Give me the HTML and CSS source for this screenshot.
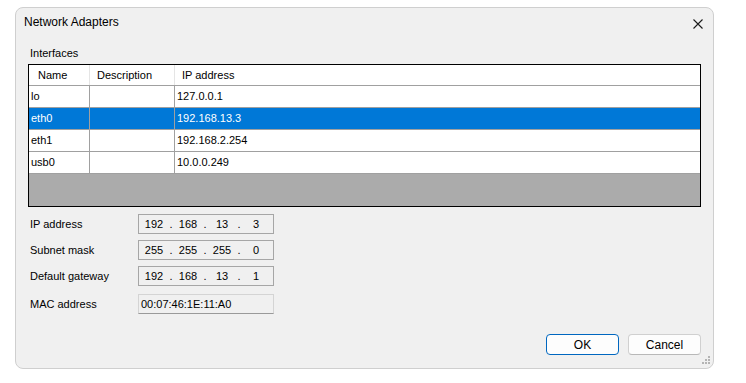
FILE: index.html
```html
<!DOCTYPE html>
<html lang="en">
<head>
  <meta charset="UTF-8">
  <title>Network Adapters</title>
  <link rel="stylesheet" href="styles.css">
</head>
<body>
  <div class="dialog">
    <div class="titlebar">
      <span class="title">Network Adapters</span>
      <svg class="close" width="10" height="10" viewBox="0 0 10 10">
        <path d="M0.5 0.5 L9.5 9.5 M9.5 0.5 L0.5 9.5" stroke="#1a1a1a" stroke-width="1.1" fill="none"/>
      </svg>
    </div>

    <div class="content">
      <div class="group-label">Interfaces</div>
      <div class="list">
        <div class="row head">
          <div class="cell name">Name</div>
          <div class="cell desc">Description</div>
          <div class="cell ip">IP address</div>
        </div>
        <div class="row">
          <div class="cell name">lo</div>
          <div class="cell desc"></div>
          <div class="cell ip">127.0.0.1</div>
        </div>
        <div class="row selected">
          <div class="cell name">eth0</div>
          <div class="cell desc"></div>
          <div class="cell ip">192.168.13.3</div>
        </div>
        <div class="row">
          <div class="cell name">eth1</div>
          <div class="cell desc"></div>
          <div class="cell ip">192.168.2.254</div>
        </div>
        <div class="row">
          <div class="cell name">usb0</div>
          <div class="cell desc"></div>
          <div class="cell ip">10.0.0.249</div>
        </div>
        <div class="empty"></div>
      </div>

      <div class="fields">
        <div class="field">
          <span class="label">IP address</span>
          <div class="ipbox">
            <span class="oct">192</span><span class="dot">.</span><span class="oct">168</span><span class="dot">.</span><span class="oct">13</span><span class="dot">.</span><span class="oct">3</span>
          </div>
        </div>
        <div class="field">
          <span class="label">Subnet mask</span>
          <div class="ipbox">
            <span class="oct">255</span><span class="dot">.</span><span class="oct">255</span><span class="dot">.</span><span class="oct">255</span><span class="dot">.</span><span class="oct">0</span>
          </div>
        </div>
        <div class="field">
          <span class="label">Default gateway</span>
          <div class="ipbox">
            <span class="oct">192</span><span class="dot">.</span><span class="oct">168</span><span class="dot">.</span><span class="oct">13</span><span class="dot">.</span><span class="oct">1</span>
          </div>
        </div>
        <div class="field mac">
          <span class="label">MAC address</span>
          <div class="macbox">00:07:46:1E:11:A0</div>
        </div>
      </div>

      <div class="buttons">
        <button class="btn default">OK</button>
        <button class="btn">Cancel</button>
      </div>
    </div>

    <svg class="grip" width="8" height="8" viewBox="0 0 8 8">
      <rect x="6" y="0" width="2" height="2" fill="#b4b4b4"/>
      <rect x="3" y="3" width="2" height="2" fill="#b4b4b4"/>
      <rect x="6" y="3" width="2" height="2" fill="#b4b4b4"/>
      <rect x="0" y="6" width="2" height="2" fill="#b4b4b4"/>
      <rect x="3" y="6" width="2" height="2" fill="#b4b4b4"/>
      <rect x="6" y="6" width="2" height="2" fill="#b4b4b4"/>
    </svg>
  </div>
</body>
</html>
```

FILE: styles.css
```css
body {
  margin: 0;
  background: #fff;
  font-family: "Liberation Sans", Arial, sans-serif;
  font-size: 11px;
  color: #000;
}

.dialog {
  position: relative;
  box-sizing: border-box;
  width: 699px;
  height: 362px;
  margin: 7px 0 0 15px;
  background: #f0f0f0;
  border: 1px solid #cfcfcf;
  border-radius: 8px;
  display: flex;
  flex-direction: column;
}

/* Title bar */
.titlebar {
  height: 38px;
  display: flex;
  justify-content: space-between;
  align-items: flex-start;
  padding: 0 10px 0 8px;
}

.title {
  font-size: 12px;
  line-height: 14px;
  margin-top: 7px;
}

.close {
  margin-top: 11px;
}

/* Content */
.content {
  flex: 1;
  display: flex;
  flex-direction: column;
  padding: 0 12px 0 12px;
}

.group-label {
  line-height: 14px;
  padding-left: 2px;
  margin-bottom: 4px;
}

/* Interface list */
.list {
  border: 1px solid #000;
  background: #fff;
  height: 141px;
  display: flex;
  flex-direction: column;
}

.row {
  display: flex;
  height: 21px;
  border-bottom: 1px solid #a0a0a0;
  line-height: 21px;
}

.row.head {
  height: 20px;
  line-height: 20px;
}

.cell {
  box-sizing: border-box;
  border-right: 1px solid #a0a0a0;
  padding-left: 2px;
  white-space: nowrap;
}

.head .cell {
  border-right-color: #e5e5e5;
}

.head .name {
  padding-left: 9px;
}

.head .desc,
.head .ip {
  padding-left: 7px;
}

.cell.name {
  width: 61px;
}

.cell.desc {
  width: 85px;
}

.cell.ip {
  flex: 1;
  border-right: none;
}

.row.selected {
  background: #0078d7;
  color: #fff;
}

.empty {
  flex: 1;
  background: #ababab;
}

/* Address fields */
.fields {
  margin-top: 7px;
  display: flex;
  flex-direction: column;
  gap: 6px;
}

.field {
  display: flex;
  align-items: center;
}

.field.mac {
  margin-top: 2px;
}

.label {
  width: 108px;
  padding-left: 2px;
}

.ipbox,
.macbox {
  box-sizing: border-box;
  width: 136px;
  height: 20px;
  line-height: 18px;
  border: 1px solid #a6a6a6;
  background: #f0f0f0;
}

.ipbox {
  display: flex;
  padding-left: 3px;
}

.oct {
  width: 24px;
  text-align: center;
}

.dot {
  width: 10px;
  text-align: center;
}

.macbox {
  padding-left: 2px;
  border-color: #d4d4d4 #d4d4d4 #9a9a9a #d4d4d4;
}

/* Buttons */
.buttons {
  margin-top: auto;
  margin-bottom: 13px;
  display: flex;
  justify-content: flex-end;
  gap: 9px;
  padding-right: 0;
}

.btn {
  box-sizing: border-box;
  width: 73px;
  height: 21px;
  font-family: "Liberation Sans", Arial, sans-serif;
  font-size: 12px;
  color: #000;
  background: #fdfdfd;
  border: 1px solid #d0d0d0;
  border-bottom-color: #b8b8b8;
  border-radius: 4px;
  padding: 0;
}

.btn.default {
  border: 1px solid #0067c0;
}

.grip {
  position: absolute;
  right: 3px;
  bottom: 4px;
}
```
